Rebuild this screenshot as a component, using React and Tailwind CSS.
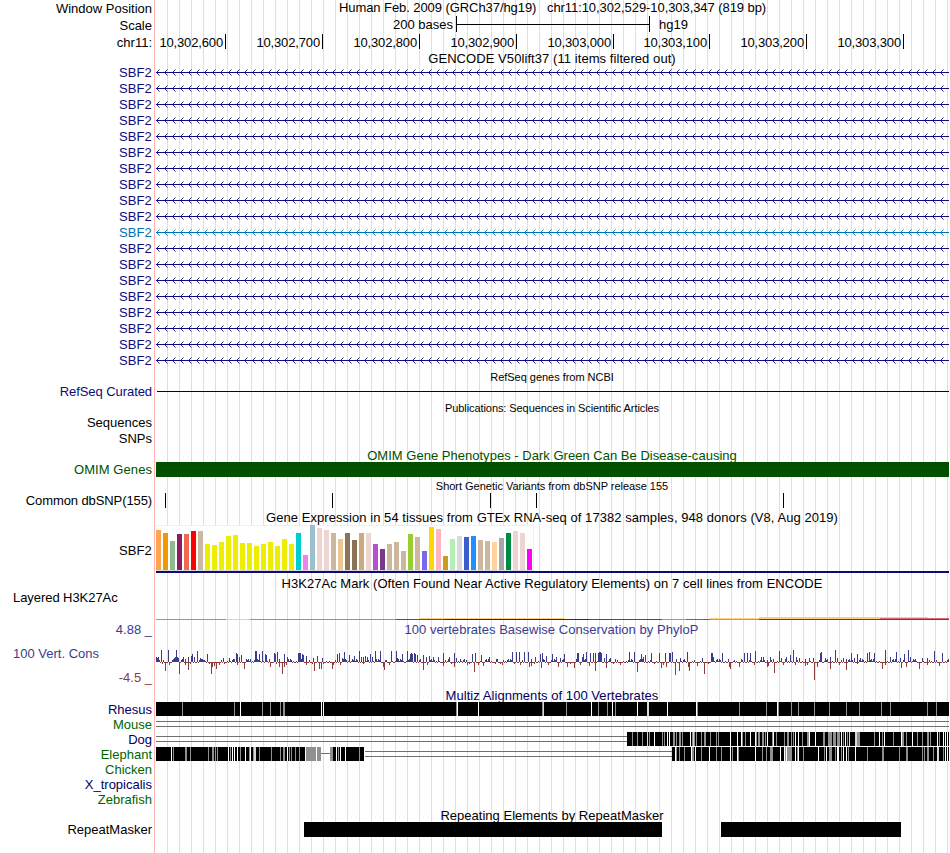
import clsx from 'clsx'

// Tracks cover pixels 156..949 of the image, all x values below are image pixels
const LEFT = 156
const WIDTH = 793

const TICKS = [
  [225, '10,302,600'],
  [322, '10,302,700'],
  [419, '10,302,800'],
  [516, '10,302,900'],
  [613, '10,303,000'],
  [709, '10,303,100'],
  [806, '10,303,200'],
  [903, '10,303,300'],
]

const SNPS = [165, 332, 490, 536, 783]

const GTEX = [
  [40, '#ffa54f'], [37, '#ee9a00'], [29, '#8fbc8f'], [36, '#8b1c62'], [36, '#ee6a50'], [39, '#ff0000'], [39, '#cdb79e'],
  [26, '#eeee00'], [25, '#eeee00'], [28, '#eeee00'], [34, '#eeee00'], [35, '#eeee00'], [27, '#eeee00'], [27, '#eeee00'],
  [24, '#eeee00'], [26, '#eeee00'], [28, '#eeee00'], [24, '#eeee00'], [31, '#eeee00'], [26, '#eeee00'], [37, '#00cdcd'],
  [15, '#ee82ee'], [45, '#9ac0cd'], [42, '#eed5d2'], [40, '#eed5d2'], [37, '#cdb79e'], [31, '#eec591'], [37, '#8b7355'],
  [30, '#8b7355'], [37, '#cdaa7d'], [37, '#eed5d2'], [26, '#b452cd'], [21, '#7a378b'], [26, '#cdb79e'], [28, '#cdb79e'],
  [19, '#cdb79e'], [36, '#9acd32'], [33, '#cdb79e'], [19, '#7a67ee'], [43, '#ffd700'], [41, '#ffb6c1'], [14, '#cd9b1d'],
  [31, '#b4eeb4'], [34, '#d9d9d9'], [33, '#3a5fcd'], [34, '#1e90ff'], [30, '#cdb79e'], [29, '#cdb79e'], [28, '#ffd39b'],
  [32, '#a6a6a6'], [37, '#008b45'], [39, '#eed5d2'], [37, '#eed5d2'], [21, '#ff00ff'],
]

// [from, to, y, height, color]
const H3K27AC = [
  [156, 226, 29, 1, '#f47068'],
  [226, 250, 29, 1, '#ffcf80'],
  [250, 396, 29, 1, '#78a878'],
  [396, 444, 29, 1, '#5c4674'],
  [420, 565, 28, 1, '#ffcf80'],
  [444, 589, 29, 1, '#5a1450'],
  [589, 662, 29, 1, '#803070'],
  [662, 686, 29, 1, '#ff7068'],
  [686, 710, 29, 1, '#806058'],
  [710, 759, 28, 1, '#ffcf80'],
  [710, 759, 29, 1, '#80c060'],
  [759, 928, 27, 2, '#ffcf80'],
  [759, 949, 29, 1, '#484860'],
  [880, 949, 28, 1, '#e06878'],
]

const CONS_UP = [
  [156, 5], [157, 4], [158, 5], [161, 12], [163, 2], [168, 12], [172, 2], [173, 3], [174, 4], [175, 5], [176, 12], [177, 5], [178, 4],
  [182, 3], [183, 5], [185, 3], [188, 5], [191, 6], [192, 8], [194, 5], [197, 11], [200, 4], [201, 3], [204, 2], [207, 8], [223, 4],
  [229, 4], [232, 2], [234, 3], [236, 9], [237, 8], [239, 5], [241, 7], [248, 3], [250, 3], [255, 11], [256, 11], [259, 8], [262, 11],
  [265, 8], [266, 7], [269, 3], [274, 9], [275, 8], [277, 10], [279, 3], [284, 8], [287, 5], [298, 9], [299, 9], [300, 9], [302, 8],
  [303, 7], [306, 6], [309, 2], [313, 4], [317, 6], [322, 4], [337, 8], [339, 9], [342, 4], [344, 10], [349, 7], [352, 3], [354, 6],
  [359, 11], [361, 5], [363, 5], [365, 6], [367, 5], [370, 8], [372, 5], [375, 11], [380, 11], [385, 2], [391, 11], [396, 11], [397, 4],
  [398, 3], [402, 8], [407, 11], [410, 8], [411, 9], [412, 8], [414, 9], [415, 8], [417, 7], [423, 7], [426, 5], [429, 6], [433, 5],
  [438, 5], [443, 9], [448, 3], [449, 5], [454, 9], [456, 4], [460, 3], [466, 2], [472, 8], [475, 9], [481, 7], [489, 5], [496, 3],
  [503, 2], [512, 10], [516, 10], [519, 10], [524, 10], [528, 10], [531, 3], [535, 5], [540, 8], [542, 9], [546, 6], [552, 8], [556, 5],
  [560, 4], [564, 8], [577, 9], [578, 9], [582, 5], [583, 8], [586, 10], [590, 9], [593, 9], [595, 9], [598, 9], [599, 10], [600, 10],
  [601, 9], [604, 4], [606, 8], [610, 4], [615, 3], [629, 10], [634, 10], [641, 8], [643, 5], [645, 7], [651, 9], [659, 9], [665, 9],
  [669, 9], [670, 9], [672, 10], [676, 3], [680, 4], [687, 10], [702, 4], [711, 9], [712, 9], [713, 5], [722, 9], [728, 3], [734, 2],
  [744, 9], [747, 9], [750, 9], [755, 11], [761, 5], [763, 5], [767, 2], [770, 5], [773, 3], [779, 11], [781, 4], [786, 5], [790, 7],
  [793, 12], [796, 5], [799, 4], [805, 3], [809, 4], [813, 4], [820, 9], [821, 10], [825, 4], [830, 5], [835, 12], [837, 4], [843, 4],
  [846, 3], [851, 9], [854, 4], [857, 8], [860, 4], [867, 9], [869, 10], [874, 9], [885, 12], [890, 5], [896, 10], [900, 4], [904, 8],
  [908, 12], [910, 5], [913, 3], [922, 4], [927, 4], [934, 11], [942, 9],
]

const CONS_DOWN = [
  [162, 2], [165, 9], [169, 3], [179, 12], [185, 3], [188, 8], [190, 2], [209, 2], [211, 12], [212, 5], [214, 4], [216, 7], [219, 3],
  [224, 2], [237, 3], [244, 7], [270, 5], [276, 2], [279, 5], [282, 12], [284, 5], [286, 3], [306, 3], [312, 2], [314, 9], [319, 7],
  [321, 7], [323, 2], [332, 7], [333, 3], [340, 3], [363, 2], [383, 5], [384, 8], [389, 3], [423, 8], [427, 3], [443, 4], [451, 2],
  [454, 5], [467, 3], [469, 2], [474, 10], [478, 3], [483, 4], [495, 2], [500, 2], [502, 3], [514, 2], [520, 3], [529, 5], [531, 4],
  [534, 2], [541, 6], [548, 3], [558, 5], [567, 5], [570, 2], [574, 6], [580, 3], [589, 4], [595, 9], [606, 6], [613, 2], [620, 3],
  [637, 10], [654, 2], [661, 6], [663, 3], [666, 5], [675, 13], [679, 9], [688, 5], [689, 9], [697, 4], [704, 12], [708, 2], [729, 5],
  [730, 7], [739, 5], [754, 3], [767, 5], [768, 4], [774, 11], [783, 3], [795, 3], [805, 4], [807, 3], [814, 18], [817, 5], [830, 7],
  [839, 3], [846, 8], [857, 2], [882, 7], [885, 3], [901, 6], [906, 5], [919, 7], [927, 3], [939, 4],
]

// Alignment gaps: [x, width, shade], w = white, l = light, g = grey
const RHESUS = [
  [182, 1, 'g'], [234, 1, 'g'], [240, 1, 'w'], [262, 1, 'g'], [270, 1, 'g'], [280, 1, 'g'], [283, 2, 'g'], [321, 1, 'w'], [323, 1, 'w'],
  [456, 1, 'g'], [457, 1, 'w'], [478, 1, 'w'], [542, 1, 'g'], [543, 1, 'l'], [566, 1, 'g'], [591, 1, 'w'], [598, 1, 'g'], [607, 1, 'g'],
  [612, 1, 'w'], [615, 1, 'g'], [637, 1, 'w'], [647, 2, 'l'], [667, 1, 'w'], [696, 1, 'w'], [697, 1, 'g'], [739, 1, 'g'], [766, 1, 'g'],
  [777, 1, 'w'], [778, 1, 'g'], [791, 1, 'g'], [798, 1, 'g'], [814, 1, 'g'], [829, 1, 'g'], [846, 1, 'g'], [859, 1, 'g'], [881, 1, 'g'],
  [890, 1, 'g'], [927, 1, 'g'], [936, 1, 'g'],
]

const DOG = [
  [632, 1, 'g'], [637, 1, 'g'], [642, 1, 'g'], [647, 1, 'l'], [649, 1, 'g'], [654, 1, 'w'], [662, 1, 'g'], [664, 1, 'g'], [667, 1, 'w'],
  [669, 1, 'w'], [673, 2, 'g'], [676, 1, 'g'], [679, 2, 'g'], [682, 1, 'g'], [690, 1, 'w'], [692, 1, 'g'], [693, 1, 'l'], [694, 1, 'g'],
  [696, 1, 'g'], [701, 1, 'g'], [704, 2, 'g'], [710, 1, 'g'], [716, 1, 'g'], [718, 1, 'g'], [730, 1, 'w'], [737, 1, 'w'], [741, 1, 'w'],
  [742, 1, 'g'], [745, 1, 'g'], [750, 1, 'w'], [755, 1, 'w'], [756, 1, 'g'], [758, 2, 'g'], [762, 2, 'g'], [765, 1, 'g'], [767, 1, 'w'],
  [772, 1, 'g'], [773, 1, 'w'], [776, 1, 'g'], [784, 1, 'g'], [787, 2, 'g'], [791, 1, 'g'], [793, 1, 'g'], [795, 1, 'w'], [798, 1, 'w'],
  [802, 1, 'g'], [807, 2, 'g'], [809, 1, 'w'], [815, 1, 'w'], [823, 2, 'g'], [828, 4, 'g'], [833, 3, 'g'], [837, 3, 'g'], [841, 1, 'w'],
  [843, 1, 'g'], [845, 1, 'w'], [847, 1, 'g'], [849, 1, 'l'], [855, 2, 'l'], [857, 3, 'g'], [874, 1, 'g'], [879, 1, 'w'], [882, 1, 'g'],
  [884, 1, 'w'], [893, 1, 'g'], [901, 1, 'w'], [902, 2, 'g'], [906, 1, 'g'], [912, 1, 'w'], [917, 1, 'g'], [922, 1, 'g'], [927, 2, 'g'],
  [930, 1, 'g'], [937, 1, 'w'], [939, 1, 'g'], [943, 1, 'w'], [945, 1, 'w'], [947, 1, 'w'],
]

const ELEPHANT_LEFT = [
  [171, 1, 'w'], [173, 1, 'g'], [185, 2, 'g'], [190, 1, 'g'], [208, 1, 'g'], [212, 2, 'g'], [215, 1, 'g'], [217, 1, 'g'], [228, 1, 'w'],
  [230, 1, 'g'], [232, 1, 'w'], [234, 1, 'w'], [237, 1, 'w'], [240, 1, 'g'], [245, 1, 'w'], [249, 1, 'g'], [250, 1, 'w'], [253, 1, 'g'],
  [254, 2, 'l'], [259, 1, 'g'], [271, 1, 'g'], [280, 1, 'g'], [283, 2, 'g'], [287, 1, 'w'], [289, 1, 'g'], [291, 1, 'g'], [295, 1, 'g'],
  [299, 1, 'g'], [305, 1, 'w'], [306, 10, 'g'], [316, 1, 'w'], [317, 4, 'g'],
]

const ELEPHANT_MID = [[330, 3, 'g'], [336, 1, 'w'], [338, 1, 'g'], [340, 1, 'w'], [345, 1, 'w'], [359, 1, 'g']]

const ELEPHANT_RIGHT = [
  [675, 1, 'w'], [676, 1, 'g'], [679, 1, 'g'], [684, 1, 'g'], [691, 1, 'w'], [692, 2, 'g'], [695, 1, 'w'], [701, 1, 'g'], [709, 1, 'w'],
  [716, 1, 'g'], [721, 1, 'g'], [730, 1, 'w'], [732, 1, 'g'], [737, 1, 'w'], [738, 1, 'g'], [755, 1, 'w'], [762, 1, 'g'], [766, 1, 'g'],
  [770, 3, 'g'], [780, 1, 'w'], [784, 1, 'w'], [785, 1, 'g'], [786, 1, 'w'], [787, 5, 'g'], [795, 1, 'w'], [797, 1, 'g'], [798, 1, 'w'],
  [803, 1, 'g'], [818, 1, 'w'], [824, 1, 'g'], [826, 1, 'w'], [829, 3, 'g'], [835, 1, 'g'], [837, 2, 'w'], [841, 1, 'g'], [843, 1, 'w'],
  [846, 1, 'w'], [848, 1, 'g'], [855, 1, 'w'], [867, 1, 'g'], [882, 2, 'g'], [899, 1, 'g'], [906, 2, 'g'], [922, 1, 'g'], [924, 1, 'g'],
  [927, 2, 'g'], [933, 1, 'g'], [937, 2, 'l'], [943, 1, 'g'], [945, 1, 'w'], [947, 1, 'w'],
]

const SHADES = { w: '#ffffff', l: '#d8d8d8', g: '#909090' }

function Row({ label, labelClass, className, children }) {
  return (
    <div className={clsx('flex', className)}>
      <div className={clsx('flex w-[156px] shrink-0 items-center justify-end pr-1 leading-none whitespace-pre', labelClass)}>{label}</div>
      <div className="flex w-[793px] shrink-0">{children}</div>
    </div>
  )
}

function Title({ className, small, children }) {
  return (
    <div className={clsx('flex items-center justify-center pl-[154px] leading-none whitespace-pre', small ? 'text-[11px]' : 'text-[13px]', className)}>
      {children}
    </div>
  )
}

function Track({ height, children }) {
  return (
    <svg className="block shrink-0" width={WIDTH} height={height} viewBox={`${LEFT} 0 ${WIDTH} ${height}`} shapeRendering="crispEdges">
      {children}
    </svg>
  )
}

function GeneArrows({ color }) {
  return (
    <Track height={16}>
      <rect x={LEFT} y="8" width={WIDTH} height="1" fill={color} />
      {Array.from({ length: 99 }).map((_, i) => {
        const x = 157 + i * 8
        return (
          <g key={i} fill={color}>
            <path opacity="0.85" d={`M${x} 7h1v1h-1z M${x} 9h1v1h-1z M${x + 1} 6h1v1h-1z M${x + 1} 10h1v1h-1z`} />
            <path opacity="0.5" d={`M${x + 2} 5h1v1h-1z M${x + 2} 11h1v1h-1z`} />
          </g>
        )
      })}
    </Track>
  )
}

function Block({ from, to, gaps = [] }) {
  return (
    <>
      <rect x={from} y="0" width={to - from} height="14" fill="#000" />
      {gaps.map(([x, w, shade]) => (
        <rect key={x} x={x} y="0" width={w} height="14" fill={SHADES[shade]} />
      ))}
    </>
  )
}

function DoubleLine({ from, to }) {
  return <path d={`M${from} 4.5H${to} M${from} 9.5H${to}`} stroke="#707070" />
}

function Conservation() {
  const up = new Map(CONS_UP)
  const down = new Map(CONS_DOWN)
  return (
    <Track height={67}>
      {Array.from({ length: WIDTH }).map((_, i) => {
        const x = LEFT + i
        const near = down.has(x - 1) || down.has(x + 1) || down.has(x + 2)
        const noise = (x * x * 7 + x * 13) % 11
        const rise = up.get(x) || (down.has(x) || near ? 0 : noise > 9 ? 3 : noise > 7 ? 2 : noise < 3 ? 0 : 1)
        const drop = down.get(x) || (rise ? 0 : 1)
        return (
          <g key={x}>
            {rise > 0 && <rect x={x} y={42 - rise} width="1" height={rise} fill="#3c3c8c" />}
            {drop > 0 && <rect x={x} y="42" width="1" height={drop} fill="#8c3c3c" />}
          </g>
        )
      })}
    </Track>
  )
}

export default function App() {
  return (
    <div className="relative h-[853px] w-[950px] overflow-hidden bg-white font-['Liberation_Sans',Arial,sans-serif] text-[13px] text-black">
      {/* guidelines behind every track */}
      <div className="absolute inset-y-0 left-[154px] w-[795px] border-l border-[#ffb4b4] pl-px">
        <div className="h-full bg-[repeating-linear-gradient(to_right,transparent_0px,transparent_11px,#dcdcf8_11px,#dcdcf8_12px)]" />
      </div>

      <div className="relative flex flex-col">
        <Row className="h-4" label="Window Position">
          <div className="flex flex-1 items-center justify-center pb-0.5 leading-none tracking-[-0.07px] whitespace-pre">
            {'Human Feb. 2009 (GRCh37/hg19)   chr11:10,302,529-10,303,347 (819 bp)'}
          </div>
        </Row>
        <Row className="h-[17px]" label="Scale" labelClass="pt-0.5">
          <div className="flex w-[297px] items-center justify-end leading-none">200 bases</div>
          <div className="ml-[3px] flex h-4 w-[194px] items-center border-x border-black pt-px">
            <div className="h-px w-full bg-black" />
          </div>
          <div className="flex items-center pl-[9px] leading-none">hg19</div>
        </Row>
        <Row className="h-[17px]" label="chr11:" labelClass="pt-0.5">
          {TICKS.map(([x, text], i) => (
            <div
              key={x}
              className="flex h-[15px] shrink-0 items-center justify-end self-center border-r border-black pt-0.5 pr-0.5 leading-none tracking-[-0.15px]"
              style={{ width: x + 1 - (i ? TICKS[i - 1][0] + 1 : LEFT) }}
            >
              {text}
            </div>
          ))}
        </Row>

        <Title className="h-[14px] pt-0.5 tracking-[0.07px]">GENCODE V50lift37 (11 items filtered out)</Title>
        {Array.from({ length: 19 }).map((_, i) => (
          <Row key={i} className="h-4" label="SBF2" labelClass={clsx('tracking-[0.15px]', i === 10 ? 'text-[#0072b2]' : 'text-[#0c0c78]')}>
            <GeneArrows color={i === 10 ? '#0072b2' : '#0c0c78'} />
          </Row>
        ))}

        <Title small className="h-4 pt-0.5 tracking-[-0.03px]">RefSeq genes from NCBI</Title>
        <Row className="h-[15px]" label="RefSeq Curated" labelClass="text-[#0c0c78] tracking-[-0.07px]">
          <Track height={15}>
            <rect x="157" y="7" width="792" height="1" fill="#000050" />
          </Track>
        </Row>

        <Title small className="h-4 pt-0.5 tracking-[-0.08px]">Publications: Sequences in Scientific Articles</Title>
        <Row className="h-[15px]" label="Sequences" />
        <Row className="h-4" label="SNPs" />

        <Title className="h-4 pt-0.5 tracking-[0.02px] text-[#005000]">OMIM Gene Phenotypes - Dark Green Can Be Disease-causing</Title>
        <Row className="h-[15px]" label="OMIM Genes" labelClass="text-[#005000] tracking-[0.07px]">
          <div className="flex-1 bg-[#005000]" />
        </Row>

        <Title small className="h-4 pt-0.5 tracking-[-0.02px]">Short Genetic Variants from dbSNP release 155</Title>
        <Row className="h-[15px]" label="Common dbSNP(155)" labelClass="tracking-[-0.1px]">
          <Track height={15}>
            {SNPS.map((x) => (
              <rect key={x} x={x} y="0" width="1" height="15" fill="#000" />
            ))}
          </Track>
        </Row>

        <Title className="h-[17px] pt-0.5 tracking-[0.05px]">Gene Expression in 54 tissues from GTEx RNA-seq of 17382 samples, 948 donors (V8, Aug 2019)</Title>
        <Row className="h-12" label="SBF2" labelClass="pt-0.5 tracking-[0.15px]">
          <Track height={48}>
            <rect x="156" y="0" width="378" height="46" fill="#f0f0f0" />
            <rect x="156" y="1" width="377" height="44" fill="#fff" />
            <rect x="156" y="45" width="378" height="1" fill="#d8d8d8" />
            {GTEX.map(([h, color], i) => (
              <rect key={i} x={LEFT + i * 7} y={45 - h} width="5" height={h} fill={color} />
            ))}
            <rect x="156" y="46" width={WIDTH} height="2" fill="#0c0c78" />
          </Track>
        </Row>

        <Title className="h-[17px] pt-1 tracking-[0.04px]">H3K27Ac Mark (Often Found Near Active Regulatory Elements) on 7 cell lines from ENCODE</Title>
        <Row className="h-[30px]" label="Layered H3K27Ac" labelClass="justify-start! items-start! pl-[13px] pt-px tracking-[-0.06px]">
          <Track height={30}>
            {H3K27AC.map(([from, to, y, h, color], i) => (
              <rect key={i} x={from} y={y} width={to - from} height={h} fill={color} />
            ))}
          </Track>
        </Row>

        <div className="flex h-[67px]">
          <div className="flex w-[156px] shrink-0 flex-col justify-between py-[3px] leading-none text-[#3c3c8c]">
            <div className="pr-1 text-right">4.88 _</div>
            <div className="pl-[13px]">100 Vert. Cons</div>
            <div className="pr-1 text-right text-[#8c3c3c]">-4.5 _</div>
          </div>
          <div className="relative w-[793px]">
            <div className="absolute top-[3px] right-0.5 left-0 text-center leading-none tracking-[0.04px] text-[#3c3c8c]">
              100 vertebrates Basewise Conservation by PhyloP
            </div>
            <Conservation />
          </div>
        </div>

        <Title className="h-[15px] pt-0.5 tracking-[0.05px] text-[#000064]">Multiz Alignments of 100 Vertebrates</Title>
        <Row className="h-[15px]" label="Rhesus" labelClass="text-[#000064]">
          <Track height={15}>
            <Block from={156} to={949} gaps={RHESUS} />
          </Track>
        </Row>
        <Row className="h-[15px]" label="Mouse" labelClass="text-[#006400]">
          <Track height={15}>
            <DoubleLine from={156} to={949} />
          </Track>
        </Row>
        <Row className="h-[15px]" label="Dog" labelClass="text-[#000064]">
          <Track height={15}>
            <DoubleLine from={156} to={627} />
            <Block from={627} to={949} gaps={DOG} />
          </Track>
        </Row>
        <Row className="h-[15px]" label="Elephant" labelClass="text-[#006400]">
          <Track height={15}>
            <Block from={156} to={321} gaps={ELEPHANT_LEFT} />
            <path d="M321 6.5H330" stroke="#707070" />
            <Block from={330} to={364} gaps={ELEPHANT_MID} />
            <DoubleLine from={365} to={672} />
            <Block from={672} to={949} gaps={ELEPHANT_RIGHT} />
          </Track>
        </Row>
        <Row className="h-[15px]" label="Chicken" labelClass="text-[#006400]" />
        <Row className="h-[15px]" label="X_tropicalis" labelClass="text-[#000064]" />
        <Row className="h-[15px]" label="Zebrafish" labelClass="text-[#006400]" />

        <Title className="h-[15px] pt-0.5 tracking-[0.02px]">Repeating Elements by RepeatMasker</Title>
        <Row className="h-[15px]" label="RepeatMasker">
          <Track height={15}>
            <rect x="304" y="0" width="358" height="15" fill="#000" />
            <rect x="721" y="0" width="180" height="15" fill="#000" />
          </Track>
        </Row>
      </div>
    </div>
  )
}
